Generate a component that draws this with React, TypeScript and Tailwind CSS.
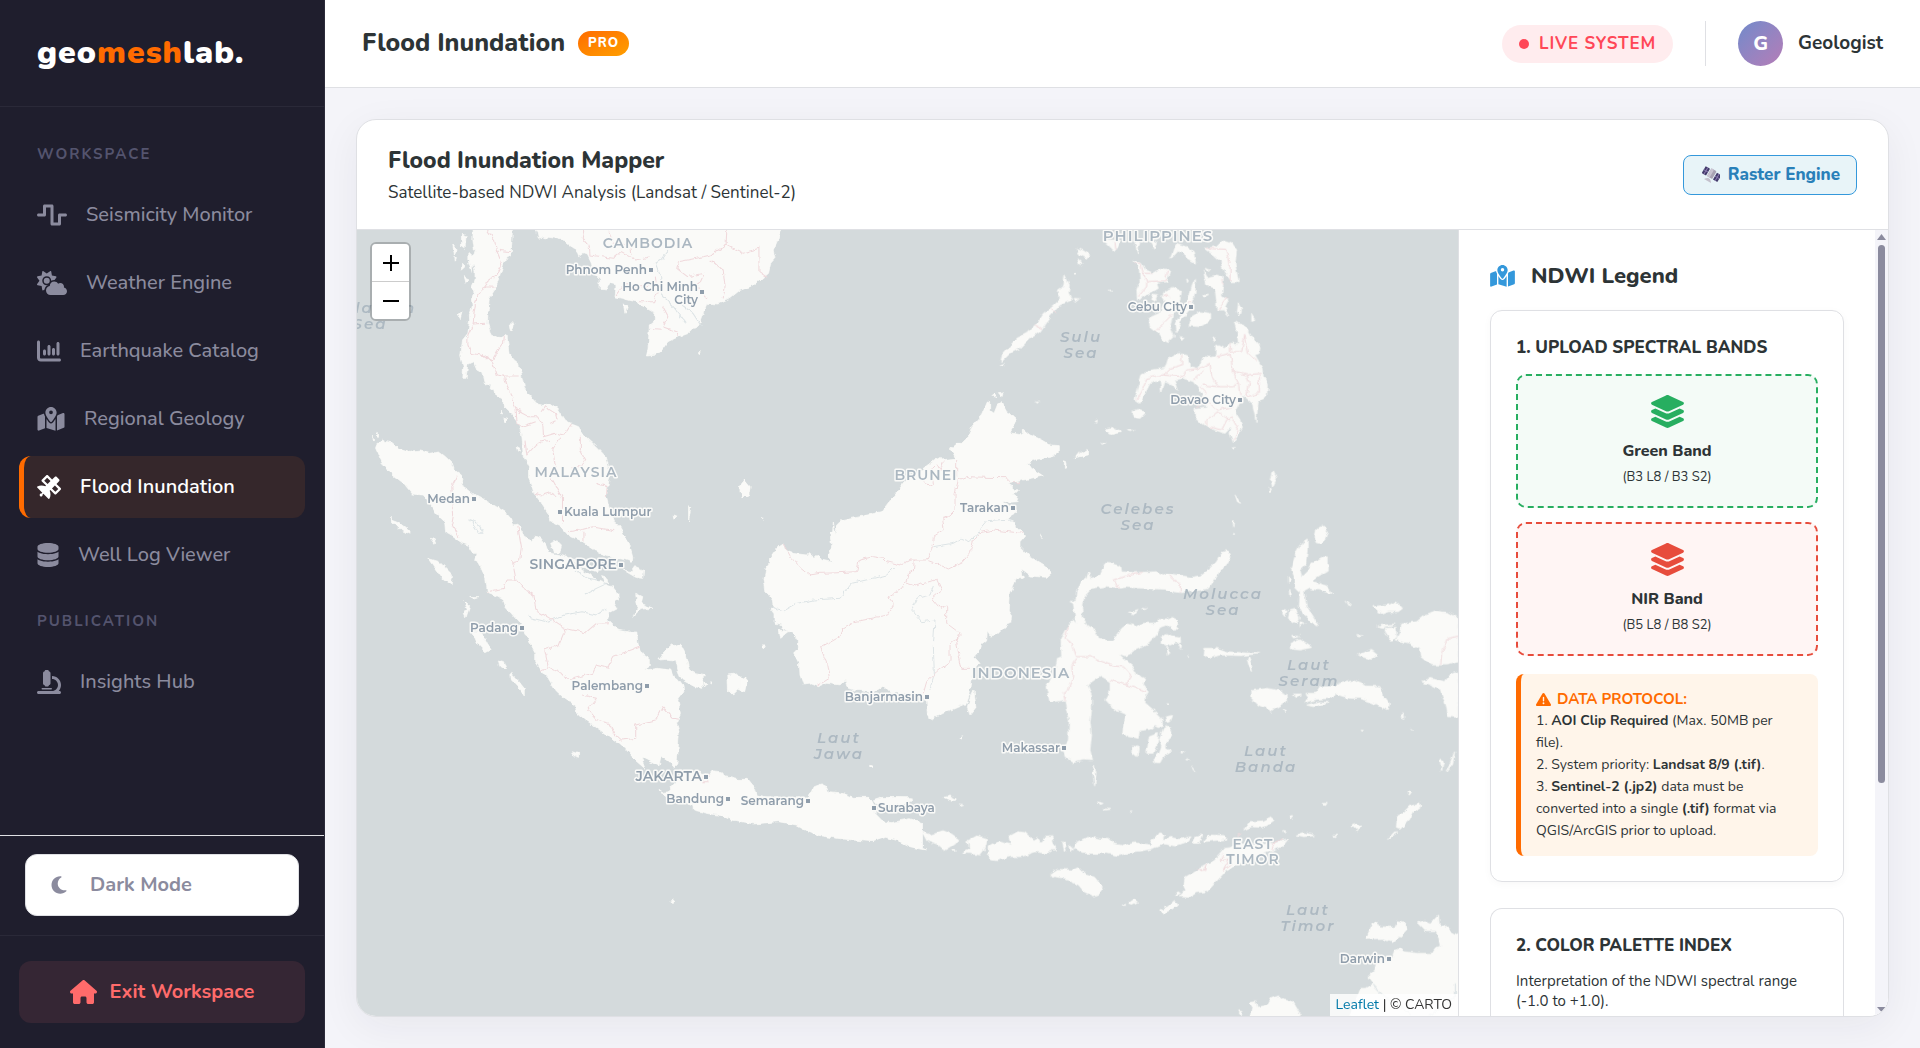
import React from "react";
import type { IconType } from "react-icons";
import {
  FaWaveSquare,
  FaCloudSun,
  FaChartColumn,
  FaMapLocationDot,
  FaSatellite,
  FaDatabase,
  FaMicroscope,
  FaMoon,
  FaHouse,
  FaLayerGroup,
  FaTriangleExclamation,
} from "react-icons/fa6";

/* ---------- Sidebar ---------- */

type NavEntry = { label: string; icon: IconType; size: string; active?: boolean };

const workspace: NavEntry[] = [
  { label: "Seismicity Monitor", icon: FaWaveSquare, size: "w-[30px]" },
  { label: "Weather Engine", icon: FaCloudSun, size: "w-[30px]" },
  { label: "Earthquake Catalog", icon: FaChartColumn, size: "w-6" },
  { label: "Regional Geology", icon: FaMapLocationDot, size: "w-7" },
  { label: "Flood Inundation", icon: FaSatellite, size: "w-6", active: true },
  { label: "Well Log Viewer", icon: FaDatabase, size: "w-[22px]" },
];

const publication: NavEntry[] = [{ label: "Insights Hub", icon: FaMicroscope, size: "w-6" }];

function NavItem({ label, icon: Icon, size, active }: NavEntry) {
  return (
    <a
      href="#"
      aria-current={active ? "page" : undefined}
      className={
        "flex h-[62px] items-center gap-[19px] rounded-xl border-l-[5px] px-[13px] text-xl " +
        (active
          ? "border-[#ff6b00] bg-[#35272b] font-semibold text-white"
          : "border-transparent font-medium text-[#8b8b9e]")
      }
    >
      <Icon className={"h-6 shrink-0 " + size} />
      <span>{label}</span>
    </a>
  );
}

function NavSection({ title, items }: { title: string; items: NavEntry[] }) {
  return (
    <section>
      <h2 className="px-[18px] pt-[14px] pb-5 text-[15px] leading-5 font-bold tracking-[2px] text-[#54546e] uppercase">
        {title}
      </h2>
      <div className="flex flex-col gap-[6px]">
        {items.map((item) => (
          <NavItem key={item.label} {...item} />
        ))}
      </div>
    </section>
  );
}

function Sidebar() {
  return (
    <aside className="flex w-[325px] shrink-0 flex-col border-r border-[#2c2b3a] bg-[#1f1e2d]">
      <div className="flex h-[107px] shrink-0 items-center border-b border-[#2a2938] px-[37px]">
        <p className="text-[32px] leading-10 font-black tracking-[1px] text-white">
          geo<span className="text-[#ff6b00]">mesh</span>lab.
        </p>
      </div>
      <nav className="flex min-h-0 flex-1 flex-col gap-[11px] overflow-hidden px-[19px] pt-[23px]">
        <NavSection title="Workspace" items={workspace} />
        <NavSection title="Publication" items={publication} />
      </nav>
      <div className="border-t border-[#dfe0e4] px-[25px] pt-[18px] pb-[19px]">
        <button className="flex h-[62px] w-full items-center gap-[23px] rounded-xl border border-[#dfe0e4] bg-white px-[25px] text-xl font-bold text-[#8b8b9e]">
          <FaMoon className="h-5 w-4" />
          Dark Mode
        </button>
      </div>
      <div className="border-t border-[#2a2938] px-[19px] pt-[25px] pb-[25px]">
        <a
          href="#"
          className="flex h-[62px] items-center justify-center gap-[13px] rounded-xl bg-[#352634] text-xl font-bold text-[#ff6b6b]"
        >
          <FaHouse className="h-6 w-[27px]" />
          Exit Workspace
        </a>
      </div>
    </aside>
  );
}

/* ---------- Top bar ---------- */

function TopBar() {
  return (
    <header className="flex h-[88px] shrink-0 items-center justify-between border-b border-[#dfe0e4] bg-white px-[37px]">
      <div className="flex items-center gap-[13px]">
        <h1 className="pb-[2px] text-[25px] leading-8 font-extrabold text-[#2d3436]">Flood Inundation</h1>
        <span className="rounded-full bg-linear-to-br from-[#ff6b00] to-[#ff9f00] px-[10px] text-[13px] leading-[25px] font-extrabold tracking-[1px] text-white">
          PRO
        </span>
      </div>
      <div className="flex items-center gap-8">
        <div className="flex h-[38px] items-center gap-[10px] rounded-full bg-[#ffecee] px-[17px] text-[17px] font-bold tracking-wider text-[#ff4757]">
          <span className="size-[10px] rounded-full bg-[#ff4757]" />
          LIVE SYSTEM
        </div>
        <div className="flex items-center gap-[15px] border-l border-[#dfe0e4] pl-8">
          <span className="flex size-[45px] items-center justify-center rounded-full bg-linear-to-br from-[#6f8acb] to-[#b47cb7] text-xl font-extrabold text-white">
            G
          </span>
          <span className="text-[19px] font-bold text-[#2d3436]">Geologist</span>
        </div>
      </div>
    </header>
  );
}

/* ---------- Map ---------- */

// Land outlines, grouped by survey sheet. Each sheet has its own origin and scale.
type Sheet = { transform: string; land: string; borders: string; rivers: string };

const sheets: Sheet[] = [
  {
    // Indochina, Malay peninsula, Sumatra
    transform: "translate(350 220) scale(.35714 .33333)",
    land:
      "M75 668L88 660 100 664 118 668 140 688 165 697 200 693 225 700 250 696 265 708 285 728 292 750 312 765 316 782 310 795 330 808 350 825 380 842 410 860 440 880 452 895 456 915 470 912 480 930 490 950 510 965 520 948 535 955 548 975 556 998 580 1003 610 1012 640 1040 665 1058 700 1085 735 1100 750 1120 752 1140 738 1148 748 1165 725 1178 722 1200 750 1230 780 1236 803 1236 808 1285 820 1305 838 1318 838 1334 828 1350 860 1345 898 1350 905 1370 918 1375 932 1395 935 1415 918 1440 925 1480 915 1510 922 1540 918 1600 915 1635 908 1643 895 1625 872 1608 865 1638 840 1625 815 1612 828 1648 800 1622 770 1585 755 1570 740 1560 700 1530 660 1500 635 1478 630 1455 600 1435 575 1410 555 1375 535 1350 520 1325 520 1300 505 1270 490 1240 480 1215 455 1185 435 1160 430 1140 410 1128 385 1118 380 1075 365 1040 352 1018 356 1000 345 1000 330 975 310 968 285 950 268 940 265 905 240 880 225 850 205 825 175 822 150 790 120 765 95 740 80 705 70 680Z" +
      "M345 20L455 20 452 95 430 130 415 180 405 210 390 235 387 270 385 310 395 345 410 352 425 352 440 345 442 370 445 400 460 420 472 430 480 465 488 500 500 525 525 552 540 556 560 550 580 565 600 600 620 612 640 620 655 645 690 680 712 705 722 740 728 765 722 800 718 830 728 870 740 905 755 920 768 945 782 970 792 1010 790 1028 770 1020 735 1012 700 1000 650 965 610 945 590 920 560 905 555 880 540 855 515 820 510 800 500 775 500 740 485 710 483 670 480 640 470 605 455 585 430 560 428 532 410 528 405 508 392 510 395 492 380 495 372 460 355 450 345 425 330 432 325 475 316 475 318 440 310 410 315 360 330 340 335 300 334 285 342 260 340 240 348 220 340 205 350 180 350 150 340 120 348 90 344 60Z" +
      "M520 20L528 58 545 50 575 55 600 62 620 80 632 85 640 110 655 98 665 102 675 125 680 150 700 175 700 208 720 210 728 190 745 195 742 230 760 235 800 245 830 265 855 280 855 300 838 315 836 360 834 390 830 408 850 406 870 395 890 365 920 350 945 340 960 325 975 322 990 275 1000 250 1030 252 1060 238 1090 212 1120 200 1150 180 1172 160 1178 130 1190 115 1185 90 1198 60 1208 20Z" +
      "M448 310L456 302 460 320 452 335ZM1090 800L1105 780 1120 800 1115 825 1100 830ZM110 895L135 905 168 935 168 944 140 928ZM218 1015L250 1025 287 1065 283 1095 260 1078 245 1055ZM562 970L580 962 592 975 588 996 570 996ZM620 1020L650 1025 695 1045 690 1055 650 1040ZM765 1050L790 1055 800 1040 822 1050 820 1075 800 1072ZM705 1070L720 1075 728 1090 710 1085ZM800 1120L820 1130 815 1150 848 1165 815 1168 795 1190 805 1160ZM318 1142L335 1160 325 1192 320 1180 328 1165ZM335 1132L358 1133 345 1138ZM340 1232L360 1235 375 1250 395 1290 380 1298 355 1270ZM415 1320L430 1325 438 1350 420 1340ZM450 1360L465 1375 488 1405 488 1428 470 1400 452 1380ZM620 1595L640 1600 640 1612 628 1608ZM905 885L916 890 908 900ZM948 860L954 862 948 905ZM288 75L300 90 292 105ZM312 40L325 48 322 85 312 78ZM330 100L345 115 342 155 330 120ZM312 130L322 140 312 150ZM290 110L298 120 292 125ZM320 170L335 178 325 190ZM300 285L314 275 308 300ZM60 652L70 660 66 664ZM75 640L84 648 78 650ZM765 250L776 258 770 280ZM975 398L984 395 978 404ZM428 594L442 598 434 606ZM468 680L476 685 472 694ZM425 570L430 582 424 580ZM225 955L240 960 235 970Z" +
      "M865 1320L885 1290 900 1275 910 1280 925 1272 935 1290 943 1320 950 1350 965 1358 995 1365 985 1390 988 1405 965 1400 930 1380 920 1355 912 1320 890 1318ZM1058 1365L1080 1362 1112 1382 1105 1415 1085 1408 1075 1418 1060 1418ZM1010 1385L1016 1388 1012 1392ZM988 1392L1000 1395 992 1400ZM898 2043L907 2040 905 2048ZM1455 1636L1466 1638 1460 1643ZM1155 1278L1166 1280 1160 1286ZM865 1705L872 1710 867 1713Z",
    borders:
      "M385 30L405 62 410 90 425 130 410 165 385 185 368 210 355 235 348 270 345 310 330 345 330 375 340 400 385 410 400 430 410 465 430 468 475 468M410 90L448 95M375 200L408 202M345 312L380 310M432 350L430 370 415 390 395 425 370 400M432 468L440 500 455 530 465 570 500 590 525 590 540 615 542 650 575 640 600 645 620 612M465 570L468 610 480 620 520 605M535 575L545 560 575 580 580 600 560 610M560 660L540 665 520 675 495 705 490 665M590 650L568 690 575 740 562 770 578 800 595 835 595 910M645 650L645 690 660 720 650 740 620 740M690 790L720 800 718 830M515 820L540 825 560 818 580 830M610 935L645 930 680 920 740 932M655 935L655 965M655 30L650 55 670 80 672 105 735 115 760 95 800 120 840 110M725 35L740 70 785 75 790 105M1055 30L1053 75 1010 105 970 115 920 125 915 145 945 170 990 160M1053 75L1080 90 1100 100 1145 85 1145 155 1168 172M855 170L860 220 850 245 810 245M990 165L975 200 1000 235M1010 120L1045 150 1050 200 1045 235M745 225L765 195 820 200 850 190M875 260L890 290 875 320 915 335 920 350M838 325L870 328M300 770L285 800 290 880 285 910 305 950M470 920L480 980 475 1020 455 1025 465 1080 440 1080 430 1105 385 1115M465 1080L485 1105 515 1125 520 1170 560 1195 595 1220 600 1235 585 1275 545 1290 555 1340 535 1355M600 1225L660 1238 690 1210 725 1208M555 1340L620 1378 680 1360 690 1335 725 1345 735 1310 808 1282M650 1425L690 1435 665 1470 690 1500 725 1510 740 1540 760 1560 800 1555 800 1515 855 1500 875 1460 905 1495 918 1498M965 1690L965 1720 970 1740",
    rivers:
      "M890 90L870 120 855 130 870 170 870 220 905 260 940 310M930 255L960 280 985 320M500 1192L550 1205 600 1185 650 1175 690 1185 720 1165M335 898L350 905 375 940 360 940 345 915 340 900M655 1125L690 1105 720 1090M630 1050L665 1075 695 1080",
  },
  {
    // Borneo
    transform: "translate(740 380) scale(.33333)",
    land:
      "M130 492L110 505 92 530 90 548 78 565 72 595 78 635 97 660 100 680 90 685 105 705 105 730 130 735 125 745 160 760 172 780 172 810 163 820 178 850 180 885 190 915 215 912 235 920 260 910 300 915 315 900 322 925 345 930 400 938 430 918 450 938 500 940 545 945 560 965 562 1000 567 1020 610 1000 680 970 690 940 695 905 700 880 720 850 702 830 715 815 722 795 740 780 742 755 750 768 770 765 800 735 812 730 815 705 805 690 808 640 825 600 850 590 845 570 870 588 920 592 935 578 910 555 870 530 840 500 840 488 857 468 830 440 825 425 800 415 830 398 828 385 790 368 830 365 835 350 815 345 832 335 820 322 805 312 850 300 910 288 875 265 863 250 890 238 935 232 958 215 958 200 935 198 905 180 885 170 870 165 850 148 850 165 810 158 828 128 822 108 800 95 785 68 772 75 762 100 752 92 752 68 742 66 725 105 695 140 685 170 665 190 650 190 628 208 648 220 640 235 600 240 598 232 580 242 550 265 500 300 462 345 425 395 360 410 305 422 290 435 287 470 280 425 278 455 270 460 275 500 262 530 280 547 245 540 235 525 225 535 205 518 200 525 160 520 135 510Z" +
      "M755 45L770 40 768 50ZM775 38L790 35 785 50ZM0 320L14 305 30 320 28 340 12 350 0 340ZM118 750L148 755 122 775ZM692 950L702 930 708 985 690 1008 682 980ZM400 1262L430 1252 515 1253 518 1262 470 1275 410 1275ZM612 1252L650 1258 640 1262ZM388 1158L400 1158 395 1165ZM0 890L15 895 20 910 5 935 0 930ZM1010 230L1045 210 1045 225 1005 232ZM1098 150L1140 153 1115 160ZM64 412L72 410 70 418ZM66 798L76 798 72 804ZM974 245L978 262 974 265ZM660 1072L668 1070 662 1076Z",
    borders:
      "M130 492L150 530 180 560 210 585 240 580 300 578 350 575 358 540 400 530 430 535 440 545 480 555 510 540 560 540 575 510 580 470 610 450 605 420 630 405 645 390 645 340 655 300 680 290 740 292 795 293 810 308 843 308M548 300L565 320 580 310 575 265 590 250 600 270 610 245M650 240L650 290 640 300M565 542L600 555 625 567 665 548 690 520 700 480 720 458 760 450 850 460M523 540L520 570 505 580 498 605 530 617 590 598 605 630 575 655 600 685 620 675 620 730 660 760 650 790 665 865 690 865M498 605L480 630 450 648 460 675 440 705 345 725 305 750 300 770 242 803 260 850 268 895 232 918M665 765L630 795 630 845 590 875 560 905 550 940M308 1240L305 1285 265 1290 280 1335 240 1365 235 1330 205 1325 205 1310 175 1325 172 1338M45 1280L60 1310 70 1325",
    rivers:
      "M90 680L130 692 165 672 220 660 300 655 335 610 400 595 440 585 465 562M580 500L640 490 665 475 690 485 740 425 815 420M580 618L570 645 530 655 515 690 545 725 585 720 580 800 583 880 570 930",
  },
  {
    // Philippines
    transform: "translate(1000 220) scale(.33333)",
    land:
      "M195 165L208 195 205 218 215 240 180 255 150 290 120 335 90 355 60 385 30 400 5 425 10 400 50 355 80 340 110 310 130 280 160 255 180 235 175 210 190 200ZM222 235L238 236 228 244ZM232 85L250 92 270 105 262 115 240 105ZM232 115L246 128 240 138ZM222 158L230 158 224 164Z" +
      "M402 122L425 130 435 150 460 160 480 148 510 152 500 185 470 190 475 205 440 225 412 240 410 210 420 185 418 145ZM460 222L474 225 465 245 455 240ZM495 212L520 202 545 212 540 240 520 275 510 320 523 350 505 368 490 360 470 335 450 320 447 295 480 280 495 245 485 230ZM587 178L585 220 570 265 545 300 528 338 525 310 555 265 570 225 578 190ZM567 318L575 290 600 275 632 280 632 302 600 320ZM540 350L556 352 548 362ZM638 352L650 356 644 365ZM610 152L622 172 650 165 670 172 668 200 665 225 685 240 675 260 690 290 672 270 650 270 650 245 645 205 620 195ZM615 145L632 150 625 158ZM612 85L650 80 670 60 695 68 710 90 705 130 715 185 695 185 672 155 662 125 640 105ZM715 250L725 270 720 290 712 275ZM755 285L765 300 755 305ZM310 60L345 95 365 60ZM405 65L420 65 412 100ZM448 60L470 70 462 85ZM512 118L530 70 560 80 580 95 587 132 565 118 535 92ZM560 176L565 182 562 188ZM608 226L626 226 612 234ZM328 210L334 210 332 214Z" +
      "M405 540L415 500 425 465 455 450 495 445 505 415 535 400 565 408 572 440 595 445 610 410 635 412 650 405 650 375 670 385 690 370 715 370 712 340 703 305 735 318 750 345 780 380 778 400 765 405 785 440 790 470 802 490 800 530 775 545 768 605 758 550 740 535 725 530 705 575 720 600 727 625 700 668 690 640 695 620 675 640 630 625 600 605 585 590 585 565 620 560 605 520 580 485 550 475 525 480 535 510 515 495 495 485 485 515 480 480 450 490 435 520 420 550Z" +
      "M395 575L415 568 437 577 420 595 405 592ZM315 630L345 624 362 634 330 640ZM302 668L318 668 310 673ZM222 712L262 688 265 700 235 710ZM284 605L292 600 290 610ZM382 628L402 628 390 632ZM108 543L116 543 112 547ZM820 755L830 775 818 800 813 780ZM808 800L815 815 808 815ZM705 825L722 850 712 845ZM698 905L704 905 702 918ZM700 940L704 942 701 946ZM696 680L710 680 702 685ZM0 435L12 430 10 440ZM194 725L198 735 194 745ZM120 945L125 955 121 955Z",
    borders:
      "M402 130L422 130 430 160 440 185 495 182 502 155M425 160L460 160M440 185L440 200 415 230M490 225L510 230M515 285L465 335M572 245L555 270M618 85L680 88 690 130 690 185M665 180L670 190M655 270L680 230M155 262L168 280M105 315L125 325M345 65L348 90M410 540L430 500 440 475 490 465 510 445 545 435 545 405M490 465L550 470 560 450 600 445 630 430 635 470 655 500 700 500 715 490 700 455 690 400 650 410M580 480L610 455M690 370L692 395 725 395 735 340M705 455L740 465 785 460M735 345L745 400 770 420M715 490L720 525M740 465L748 490 740 530 778 520 778 465M605 495L655 500M590 560L620 540 650 570 700 560M620 615L620 600 650 575 690 600M625 620L665 630 680 600 695 590 715 630 700 660M600 500L620 520",
    rivers: "",
  },
  {
    // Sulawesi, Maluku, western Papua
    transform: "translate(1000 540) scale(.33333)",
    land:
      "M665 38L680 32 692 55 680 70 660 90 650 110 625 145 600 150 545 158 520 155 500 148 440 145 380 142 350 145 310 140 275 145 252 170 245 200 248 235 262 258 285 270 298 298 335 302 352 285 365 265 385 252 410 260 430 250 480 248 475 238 500 240 515 232 533 240 533 260 522 272 500 255 480 262 470 285 445 312 410 325 390 342 375 348 355 340 375 360 395 375 412 405 435 415 430 435 445 455 437 470 435 488 465 515 485 535 488 555 475 560 465 555 450 568 418 572 415 595 385 590 368 580 372 545 380 525 345 510 317 480 330 455 330 425 300 408 262 435 275 465 275 510 270 545 275 585 270 630 278 662 250 660 220 668 195 650 190 625 205 600 208 540 200 515 195 480 150 487 138 440 165 400 172 355 185 350 183 300 205 258 218 240 228 250 220 190 210 185 228 180 230 150 245 125 260 115 265 98 272 115 300 108 315 70 340 72 362 78 365 95 400 98 470 95 490 105 500 100 575 112 600 108 635 80 650 65Z" +
      "M283 675L288 700 284 738 279 700ZM490 565L502 558 515 570 515 590 500 605 498 625 515 635 490 650 480 668 465 668 462 655 478 640 485 620 478 600ZM448 590L475 580 472 610 462 640 440 640ZM400 618L415 622 412 650 398 638ZM496 530L518 526 512 542 500 545ZM485 290L500 280 515 288 540 290 542 305 520 310 500 318 483 310ZM532 305L545 320 542 328ZM500 320L510 335 505 345ZM615 325L650 325 680 335 720 338 780 341 720 347 660 345 625 355 612 345ZM745 352L752 368 758 392 748 380 742 360ZM755 452L800 445 830 450 858 462 860 485 815 513 775 495 755 475ZM918 460L945 460 960 440 1000 440 1020 430 1060 422 1100 438 1140 440 1150 465 1168 490 1165 512 1120 490 1080 475 1050 475 1010 462 985 475 950 478 915 488 925 470ZM920 495L960 485 990 488 940 500ZM880 462L905 462 890 470ZM870 310L895 298 935 322 900 330 872 327ZM875 286L898 290 880 294ZM1072 345L1115 328 1132 342 1115 358ZM1072 284L1090 284 1080 288ZM1118 200L1160 195 1190 186 1208 205 1195 215 1165 215 1150 222 1130 212ZM1130 258L1185 252 1150 262ZM1155 265L1185 262 1190 290 1175 305 1158 280ZM1035 180L1055 198 1045 195ZM1377 235L1345 218 1305 213 1275 225 1250 245 1205 252 1200 275 1188 300 1230 310 1260 325 1265 350 1295 375 1345 375 1377 365ZM1377 395L1350 405 1335 425 1290 415 1265 425 1290 435 1320 450 1338 495 1345 530 1377 532Z" +
      "M925 0L900 15 890 35 873 85 885 115 888 145 900 155 898 200 915 225 945 255 955 258 935 225 918 195 912 155 930 145 955 150 985 158 998 162 980 138 940 125 945 115 985 90 985 50 965 52 935 70 925 90 905 110 900 90 920 70 925 30ZM945 -10L950 -32 970 -42 983 -25 975 -5 960 10 948 8ZM850 208L862 210 855 230 848 222ZM870 212L885 208 898 235 890 250 865 235ZM900 245L915 250 900 258ZM865 110L872 118 866 130ZM388 218L415 208 400 225ZM425 205L442 207 430 210ZM1320 660L1330 665 1325 692ZM1350 670L1364 635 1358 670 1340 695ZM1205 520L1215 532 1208 535ZM1225 760L1235 755 1228 765ZM545 635L552 638 548 644ZM560 655L568 662 562 660ZM575 680L586 695 580 690ZM500 488L512 489 505 493ZM850 510L860 512 854 518ZM868 145L874 165 869 170ZM564 345L569 352 565 352ZM1084 570L1090 571 1086 575ZM1232 565L1238 570 1234 570Z",
    borders:
      "M205 258L195 295 215 310 230 350 275 350 290 360 340 378 370 380 392 405 380 435 330 420M380 435L440 455M230 355L215 380 218 410 205 450 190 460 195 480M355 145L342 120 380 108 425 97M508 105L520 120 540 130 542 158M1377 288L1345 295 1325 340 1322 375",
    rivers: "",
  },
  {
    // Java
    transform: "translate(350 600) scale(.35714 .33333)",
    land:
      "M870 578L890 575 905 555 918 540 925 508 945 518 975 515 1005 525 1015 512 1040 515 1050 530 1085 538 1115 538 1135 565 1140 585 1160 590 1250 590 1285 592 1300 560 1320 552 1335 560 1340 575 1370 578 1385 582 1410 592 1455 592 1465 610 1470 640 1493 665 1515 668 1540 662 1568 656 1603 668 1603 745 1615 750 1600 748 1568 740 1530 720 1500 712 1465 725 1385 718 1320 708 1285 695 1250 675 1200 665 1130 672 1070 660 1045 648 1000 640 962 630 960 615 925 600 895 590Z",
    borders: "M1002 520L1005 545 985 545 990 530",
    rivers: "",
  },
  {
    // Lesser Sunda islands, Timor, northern Australia
    transform: "translate(900 740) scale(.35714 .33333)",
    land:
      "M62 276L85 285 120 272 135 278 162 298 155 312 125 332 105 315 75 302ZM145 330L155 332 150 338ZM190 302L215 288 245 295 238 325 225 345 175 338 195 325ZM248 345L250 320 280 303 310 312 305 290 330 275 350 278 372 300 385 292 395 310 405 292 425 290 430 310 438 330 420 330 410 340 380 335 340 350 310 350 270 362 248 358ZM455 305L468 318 460 332ZM475 315L485 325 480 335ZM488 325L495 308 530 290 560 297 585 298 600 312 625 318 660 308 680 315 705 318 705 305 725 278 740 282 735 298 760 292 780 298 815 290 805 305 770 318 740 312 700 328 640 338 612 347 580 340 510 340ZM820 310L830 288 845 285 838 310ZM850 305L865 285 912 287 912 298ZM962 270L980 245 1015 243 1035 232 1048 243 1030 255 1010 262 985 260ZM422 402L440 388 485 390 500 382 520 405 545 412 570 445 560 460 540 468 515 455 500 435 470 420 430 412ZM625 495L632 493 630 497ZM640 490L655 478 665 486 650 493ZM730 510L750 500 768 482 778 490 765 505 735 522ZM768 470L778 455 785 460ZM795 440L798 412 840 385 880 362 910 325 930 322 940 310 1000 315 1045 310 1085 300 1070 320 1010 345 950 372 910 395 885 425 860 455 830 458 810 472 782 470 800 450Z" +
      "M1390 265L1392 230 1410 220 1430 198 1455 188 1458 200 1435 215 1425 240 1400 268ZM1365 298L1380 280 1392 278ZM1112 285L1130 278 1160 287 1130 290ZM1265 258L1278 250 1290 262 1280 272ZM1185 190L1196 190 1190 198ZM1090 230L1100 230 1094 238ZM1210 286L1224 286 1215 290ZM1422 156L1430 156 1426 162ZM1074 272L1080 272 1077 278ZM123 172L140 168 158 180 135 178ZM552 185L566 190 558 194ZM568 206L590 208 575 210ZM645 212L651 214 647 217ZM165 195L178 196 170 199ZM1305 598L1320 555 1335 543 1345 560 1385 562 1392 545 1415 550 1422 565 1405 585 1378 608 1350 595ZM1448 548L1470 542 1485 552 1495 540 1508 525 1510 560 1525 558 1545 575 1570 590 1570 880 1240 880 1290 745 1305 745 1325 732 1310 710 1330 690 1335 665 1380 650 1385 632 1402 625 1410 635 1450 640 1490 640 1500 625 1515 622 1512 595 1500 572 1470 572ZM982 840L988 800 980 785 995 782 1000 802 1030 795 1040 775 1060 768 1075 780 1100 785 1130 840ZM948 812L958 815 955 826Z",
    borders:
      "M830 385L845 395 860 375 855 390M905 345L900 365 920 355 905 390 930 370M945 290L955 280M1040 330L1050 305 1070 300",
    rivers: "M1325 735L1360 775 1400 795 1430 828M1480 828L1520 800 1555 770 1555 730",
  },
];

type Label = { x: number; y: number; lines: string[]; size?: number };

const countries: Label[] = [
  { x: 648, y: 248, lines: ["CAMBODIA"] },
  { x: 576, y: 477, lines: ["MALAYSIA"] },
  { x: 926, y: 480, lines: ["BRUNEI"] },
  { x: 1021, y: 678, lines: ["INDONESIA"], size: 15 },
  { x: 1158, y: 241, lines: ["PHILIPPINES"], size: 15 },
  { x: 1253, y: 849, lines: ["EAST", "TIMOR"] },
];

const seas: Label[] = [
  { x: 370, y: 313, lines: ["Andaman", "Sea"] },
  { x: 1081, y: 342, lines: ["Sulu", "Sea"] },
  { x: 1138, y: 514, lines: ["Celebes", "Sea"] },
  { x: 1223, y: 599, lines: ["Molucca", "Sea"] },
  { x: 1309, y: 670, lines: ["Laut", "Seram"] },
  { x: 1266, y: 756, lines: ["Laut", "Banda"] },
  { x: 839, y: 743, lines: ["Laut", "Jawa"] },
  { x: 1308, y: 915, lines: ["Laut", "Timor"] },
];

type City = { x: number; y: number; lines: string[]; side?: "right"; capital?: boolean };

const cities: City[] = [
  { x: 651, y: 270, lines: ["Phnom Penh"] },
  { x: 702, y: 292, lines: ["Ho Chi Minh", "City"] },
  { x: 474, y: 499, lines: ["Medan"] },
  { x: 560, y: 512, lines: ["Kuala Lumpur"], side: "right" },
  { x: 621, y: 565, lines: ["SINGAPORE"], capital: true },
  { x: 522, y: 628, lines: ["Padang"] },
  { x: 647, y: 686, lines: ["Palembang"] },
  { x: 706, y: 777, lines: ["JAKARTA"], capital: true },
  { x: 728, y: 799, lines: ["Bandung"] },
  { x: 808, y: 801, lines: ["Semarang"] },
  { x: 874, y: 808, lines: ["Surabaya"], side: "right" },
  { x: 927, y: 697, lines: ["Banjarmasin"] },
  { x: 1064, y: 748, lines: ["Makassar"] },
  { x: 1013, y: 508, lines: ["Tarakan"] },
  { x: 1191, y: 307, lines: ["Cebu City"] },
  { x: 1240, y: 400, lines: ["Davao City"] },
  { x: 1389, y: 959, lines: ["Darwin"] },
];

function Lines({ x, lines, step }: { x: number; lines: string[]; step: number }) {
  return (
    <>
      {lines.map((line, i) => (
        <tspan key={line} x={x} dy={i === 0 ? 0 : step}>
          {line}
        </tspan>
      ))}
    </>
  );
}

function BaseMap() {
  return (
    <svg
      viewBox="357 230 1101 786"
      preserveAspectRatio="xMidYMid slice"
      className="absolute inset-0 size-full font-['Montserrat','Inter','Open_Sans',sans-serif]"
      role="img"
      aria-label="Map of maritime Southeast Asia"
    >
      {/* Roughens the simplified outlines into a natural coast */}
      <filter id="coast" filterUnits="userSpaceOnUse" x="340" y="210" width="1140" height="820">
        <feTurbulence type="fractalNoise" baseFrequency="0.16" numOctaves="2" seed="4" result="noise" />
        <feDisplacementMap in="SourceGraphic" in2="noise" scale="5" xChannelSelector="R" yChannelSelector="G" />
      </filter>
      <g filter="url(#coast)">
        {sheets.map((sheet) => (
          <g key={sheet.transform} transform={sheet.transform} fill="none" strokeLinejoin="round">
            <path d={sheet.land} fill="#fafaf8" stroke="#fafaf8" strokeWidth="2" />
            <path d={sheet.rivers} stroke="#dde4e6" strokeWidth="3" />
            <path d={sheet.borders} stroke="#f0d9dc" strokeWidth="3" />
          </g>
        ))}
      </g>
      <g fontSize="15" fontWeight="600" fill="#adb9c2" fontStyle="italic" textAnchor="middle" letterSpacing="2">
        {seas.map((l) => (
          <text key={l.lines.join(" ")} x={l.x} y={l.y}>
            <Lines x={l.x} lines={l.lines} step={16} />
          </text>
        ))}
      </g>
      <g
        fontWeight="600"
        fill="#abb7c1"
        stroke="#fafaf8"
        strokeWidth="3"
        strokeLinejoin="round"
        paintOrder="stroke"
        textAnchor="middle"
        letterSpacing="1"
      >
        {countries.map((l) => (
          <text key={l.lines[0]} x={l.x} y={l.y} fontSize={l.size ?? 14}>
            <Lines x={l.x} lines={l.lines} step={15} />
          </text>
        ))}
      </g>
      <g fontWeight="600" fill="#8f9dab" stroke="#fafaf8" strokeWidth="3" strokeLinejoin="round" paintOrder="stroke">
        {cities.map((c) => {
          const textX = c.side === "right" ? c.x + 4 : c.x - 4;
          return (
            <g key={c.lines[0]} fontSize={c.capital ? 14 : 12} textAnchor={c.side === "right" ? "start" : "end"}>
              <text x={textX} y={c.y + (c.lines.length > 1 ? -1 : 4)}>
                <Lines x={textX} lines={c.lines} step={13} />
              </text>
              <rect x={c.x - 2} y={c.y - 2} width="4" height="4" />
            </g>
          );
        })}
      </g>
    </svg>
  );
}

function MapPanel() {
  return (
    <div className="relative min-w-0 flex-1 overflow-hidden bg-[#d4dadc]">
      <BaseMap />
      <div className="absolute top-3 left-[13px] flex flex-col overflow-hidden rounded-md border-2 border-black/20 bg-clip-padding">
        <button
          aria-label="Zoom in"
          className="flex h-[38px] w-[37px] items-center justify-center border-b border-[#ccc] bg-white text-black"
        >
          <svg viewBox="0 0 16 16" className="size-4" stroke="currentColor" strokeWidth="2">
            <path d="M0 8H16M8 0V16" />
          </svg>
        </button>
        <button aria-label="Zoom out" className="flex h-[37px] w-[37px] items-center justify-center bg-white text-black">
          <svg viewBox="0 0 16 16" className="size-4" stroke="currentColor" strokeWidth="2">
            <path d="M0 8H16" />
          </svg>
        </button>
      </div>
      <p className="absolute right-0 bottom-0 bg-white/80 px-[6px] text-sm leading-[22px] text-[#333]">
        <a href="#" className="text-[#0078a8]">
          Leaflet
        </a>{" "}
        | © CARTO
      </p>
    </div>
  );
}

/* ---------- Legend panel ---------- */

function BandUpload({ name, hint, tone }: { name: string; hint: string; tone: string }) {
  return (
    <button
      className={
        "flex h-[134px] w-full flex-col items-center rounded-[10px] border-2 border-dashed pt-[17px] " + tone
      }
    >
      <FaLayerGroup className="size-[37px]" />
      <span className="mt-[9px] text-base leading-6 font-extrabold text-[#2d3436]">{name}</span>
      <span className="mt-1 text-[13px] leading-5 text-[#2d3436]">{hint}</span>
    </button>
  );
}

function LegendPanel() {
  return (
    <div className="flex w-[430px] shrink-0 border-l border-[#dfe0e4] bg-white">
      <div className="flex min-w-0 flex-1 flex-col gap-[26px] overflow-hidden px-[31px] text-[#2d3436]">
        <div className="flex flex-col gap-5 pt-8">
          <h3 className="flex items-center gap-4 text-[22px] leading-7 font-extrabold">
            <FaMapLocationDot className="h-[22px] w-[25px] text-[#3498db]" />
            NDWI Legend
          </h3>
          <section className="rounded-xl border border-[#dfe0e4] p-[25px] shadow-[0_2px_8px_rgba(0,0,0,0.03)]">
            <h4 className="mb-[14px] text-[17px] leading-6 font-extrabold">1. UPLOAD SPECTRAL BANDS</h4>
            <div className="flex flex-col gap-[14px]">
              <BandUpload
                name="Green Band"
                hint="(B3 L8 / B3 S2)"
                tone="border-[#27ae60] bg-[#f4fbf7] text-[#27ae60]"
              />
              <BandUpload
                name="NIR Band"
                hint="(B5 L8 / B8 S2)"
                tone="border-[#e74c3c] bg-[#fff5f4] text-[#e74c3c]"
              />
            </div>
            <div className="mt-[18px] rounded-lg border-l-[5px] border-[#ff6b00] bg-[#fff5ea] px-[15px] py-[14px] text-sm leading-[22px]">
              <p className="flex items-center gap-[6px] text-[15px] font-bold text-[#ff6b00]">
                <FaTriangleExclamation className="size-[15px]" />
                DATA PROTOCOL:
              </p>
              <p>
                1. <b>AOI Clip Required</b> (Max. 50MB per file).
              </p>
              <p>
                2. System priority: <b>Landsat 8/9 (.tif)</b>.
              </p>
              <p>
                3. <b>Sentinel-2 (.jp2)</b> data must be converted into a single <b>(.tif)</b> format via QGIS/ArcGIS
                prior to upload.
              </p>
            </div>
          </section>
        </div>
        <section className="shrink-0 rounded-t-xl border border-b-0 border-[#dfe0e4] px-[25px] pt-[25px] pb-10">
          <h4 className="mb-[13px] text-[17px] leading-6 font-extrabold">2. COLOR PALETTE INDEX</h4>
          <p className="text-[15px] leading-5">Interpretation of the NDWI spectral range (-1.0 to +1.0).</p>
        </section>
      </div>
      <div className="flex w-[13px] shrink-0 flex-col items-center bg-[#f4f4f9] text-[#8b8b9e]" aria-hidden="true">
        <svg viewBox="0 0 13 15" className="h-[15px] w-[13px]" fill="currentColor">
          <path d="M6.5 4L11 10H2Z" />
        </svg>
        <div className="h-[538px] w-[7px] rounded-full bg-[#8b8b9e]" />
        <svg viewBox="0 0 13 15" className="mt-auto h-[15px] w-[13px]" fill="currentColor">
          <path d="M6.5 11L11 6H2Z" />
        </svg>
      </div>
    </div>
  );
}

function SatelliteGlyph() {
  return (
    <svg viewBox="0 0 18 18" className="size-[18px]" aria-hidden="true">
      <g transform="rotate(30 9 9)">
        <rect x="0" y="4" width="5" height="8" fill="#433b6b" />
        <rect x="13" y="4" width="5" height="8" fill="#433b6b" />
        <path d="M2.500 4V12M15.500 4V12M0 8H5M13 8H18" stroke="#8b7bb0" strokeWidth="1" />
        <rect x="6" y="3" width="6" height="9" rx="1" fill="#a9a3b3" />
        <rect x="6" y="3" width="3" height="9" rx="1" fill="#c9c4d1" />
        <path d="M5 16Q9 10 13 16Z" fill="#c3c0cc" />
      </g>
    </svg>
  );
}

/* ---------- Page ---------- */

export default function App() {
  return (
    <div className="flex h-screen overflow-hidden bg-[#f4f4f9] font-['Nunito','Open_Sans',sans-serif] text-[#2d3436]">
      <Sidebar />
      <div className="flex min-w-0 flex-1 flex-col">
        <TopBar />
        <main className="flex min-h-0 flex-1 flex-col px-[31px] py-[31px]">
          <section className="flex min-h-0 flex-1 flex-col overflow-hidden rounded-[20px] border border-[#dfe0e4] bg-white shadow-[0_10px_40px_rgba(31,30,45,0.06)]">
            <div className="flex h-[110px] shrink-0 items-center justify-between border-b border-[#dfe0e4] px-[31px]">
              <div className="pt-1">
                <h2 className="text-[23px] leading-8 font-extrabold">Flood Inundation Mapper</h2>
                <p className="text-[17px] leading-8">Satellite-based NDWI Analysis (Landsat / Sentinel-2)</p>
              </div>
              <button className="flex h-10 items-center gap-2 rounded-lg border border-[#3498db] bg-[#e8f4f8] pr-4 pl-[18px] text-[17px] font-extrabold text-[#2980b9]">
                <SatelliteGlyph />
                Raster Engine
              </button>
            </div>
            <div className="flex min-h-0 flex-1">
              <MapPanel />
              <LegendPanel />
            </div>
          </section>
        </main>
      </div>
    </div>
  );
}
